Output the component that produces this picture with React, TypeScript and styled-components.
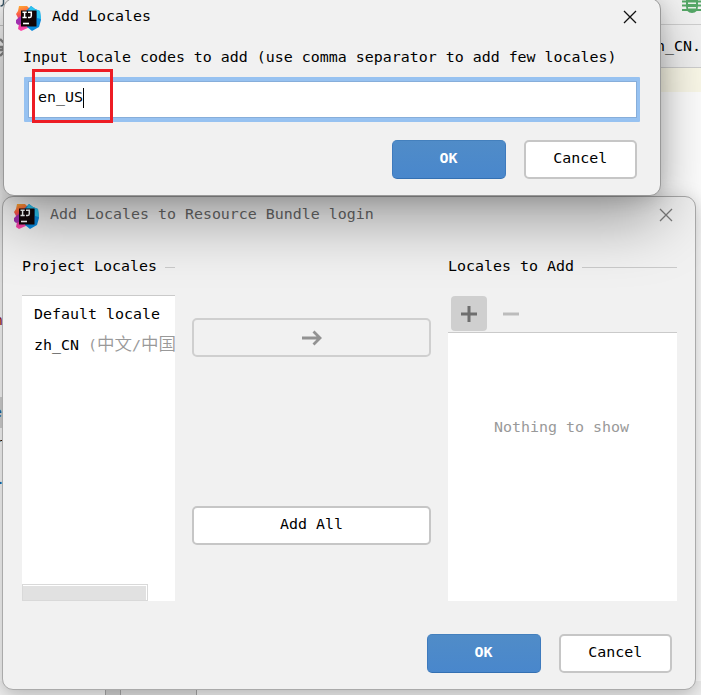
import React from "react";
import styled, { createGlobalStyle } from "styled-components";

const GlobalStyle = createGlobalStyle`
  * { box-sizing: border-box; }
  body { margin: 0; overflow: hidden; }
  button { font: inherit; padding: 0; }
  svg { display: block; flex: none; }
`;

const Desktop = styled.main`
  position: relative;
  width: 701px;
  height: 695px;
  overflow: hidden;
  display: flex;
  justify-content: space-between;
  background: #fff;
  color: #000;
  font: 14.95px/20px "DejaVu Sans Mono", "Noto Sans CJK SC", monospace;
  white-space: nowrap;
`;

const Gutter = styled.div`
  width: 30px;
  height: 695px;
  overflow: hidden;
  display: flex;
  flex-direction: column;
  background: #f8f8f8;
`;

const Fragment = styled.div<{ $h: number; $color?: string; $bg?: string; $shift?: number; $line?: boolean }>`
  height: ${(p) => p.$h}px;
  flex: none;
  color: ${(p) => p.$color ?? "#000"};
  background: ${(p) => p.$bg ?? "transparent"};
  text-indent: ${(p) => p.$shift ?? 0}px;
  border-bottom: ${(p) => (p.$line ? "1px solid #c9c9c9" : "0")};
  line-height: ${(p) => p.$h}px;
`;

const EditorPane = styled.div`
  width: 61px;
  height: 695px;
`;

const ToolStrip = styled.div`
  height: 25px;
  background: #f2f2f2;
  border-bottom: 1px solid #cfcfcf;
  display: flex;
  justify-content: flex-end;
`;

const TabStrip = styled.div`
  height: 43px;
  background: #f2f2f2;
  border-bottom: 1px solid #cfcfcf;
  text-align: right;
  line-height: 43px;
`;

const Banner = styled.div`
  height: 24px;
  background: #fcfaea;
`;

const StatusStrip = styled.div`
  position: absolute;
  left: 0;
  right: 0;
  bottom: 0;
  height: 14px;
  display: grid;
  grid-template-columns: 106px 15px 76px 1fr;
  background: #f2f2f2;
`;

const StatusCell = styled.div<{ $bg: string }>`
  background: ${(p) => p.$bg};
  border-right: 1px solid #a6a6a6;
`;

const Dialog = styled.section<{ $x: number; $y: number; $w: number; $h: number; $front?: boolean }>`
  position: absolute;
  left: ${(p) => p.$x}px;
  top: ${(p) => p.$y}px;
  width: ${(p) => p.$w}px;
  height: ${(p) => p.$h}px;
  border: 1px solid ${(p) => (p.$front ? "#999" : "#aaa")};
  border-radius: 11px;
  background: #f1f1f1;
  box-shadow: ${(p) =>
    p.$front
      ? "0 26px 60px rgba(0,0,0,.34), 0 2px 20px rgba(0,0,0,.17)"
      : "0 5px 20px rgba(0,0,0,.27)"};
`;

const TitleBar = styled.header<{ $dim?: boolean; $h: number }>`
  height: ${(p) => p.$h}px;
  padding: 0 23px 0 12px;
  display: flex;
  align-items: flex-start;
  color: ${(p) => (p.$dim ? "#686868" : "#000")};
`;

const LogoSlot = styled.div<{ $dim?: boolean }>`
  width: 25px;
  height: 25px;
  margin-top: ${(p) => (p.$dim ? 7 : 7)}px;
  margin-left: ${(p) => (p.$dim ? -1 : 0)}px;
`;

const Title = styled.h1`
  margin: 7px auto 0 11px;
  font: inherit;
`;

const CloseIcon = styled.svg<{ $dim?: boolean }>`
  width: 14px;
  height: 14px;
  margin-top: 11px;
  margin-right: ${(p) => (p.$dim ? -1 : 0)}px;
  fill: none;
  stroke: ${(p) => (p.$dim ? "#7c7c7c" : "#111")};
  stroke-width: 1.3;
`;

const PromptBody = styled.div`
  padding: 0 20px 0 19px;
  display: flex;
  flex-direction: column;
`;

const FieldFrame = styled.label`
  height: 45px;
  margin: 10px 0 0 1px;
  border: 4px solid #97c2f1;
  border-radius: 1px;
  border-width: 4px 3px 4px 4px;
  background: #fff;
  box-shadow: inset 0 0 0 1px #87aeda;
  display: flex;
  align-items: center;
  position: relative;
  padding: 0 0 5px 10px;
`;

const Caret = styled.span`
  width: 1px;
  height: 20px;
  margin-top: 1px;
  background: #000;
`;

const Highlight = styled.span`
  position: absolute;
  left: 4px;
  top: -12px;
  width: 81px;
  height: 54px;
  border: 3px solid #ed1c24;
`;

const Actions = styled.footer<{ $top: number }>`
  display: flex;
  gap: 18px;
  justify-content: flex-end;
  padding: ${(p) => p.$top}px 23px 0 0;
`;

const Button = styled.button<{ $primary?: boolean; $muted?: boolean; $wide?: boolean }>`
  width: ${(p) => (p.$wide ? "239px" : p.$primary ? "114px" : "113.5px")};
  height: 39px;
  display: flex;
  align-items: center;
  justify-content: center;
  padding-bottom: ${(p) => (p.$muted ? 0 : 3)}px;
  border-style: solid;
  border-width: ${(p) => (p.$primary ? 1 : 2)}px;
  border-color: ${(p) => (p.$primary ? "#4480bd #3e7abd #3470b2" : p.$muted ? "#cfcfcf" : "#c6c6c6")};
  border-radius: 5px;
  background: ${(p) => (p.$primary ? "linear-gradient(#508cc8, #4987cc)" : p.$muted ? "#f1f1f1" : "#fff")};
  color: ${(p) => (p.$primary ? "#fff" : "#000")};
  font-weight: ${(p) => (p.$primary ? 700 : 400)};
`;

const BundleBody = styled.div`
  height: 345px;
  padding: 0 18px 0 19px;
  display: grid;
  grid-template-columns: 153px 239px 229px;
  justify-content: space-between;
`;

const Column = styled.div`
  display: flex;
  flex-direction: column;
  min-width: 0;
`;

const Heading = styled.h2<{ $gap: number }>`
  margin: 0 0 ${(p) => p.$gap}px;
  font: inherit;
  display: flex;
  align-items: center;
  gap: 8px;
  &::after {
    content: "";
    flex: 1;
    height: 1px;
    margin-top: 3px;
    background: #cacaca;
  }
`;

const List = styled.div<{ $h: number; $center?: boolean }>`
  height: ${(p) => p.$h}px;
  background: #fff;
  border-top: 1px solid #cacaca;
  overflow: hidden;
  display: flex;
  flex-direction: column;
  padding-top: ${(p) => (p.$center ? 84 : 3)}px;
  padding-right: ${(p) => (p.$center ? 2 : 0)}px;
  color: ${(p) => (p.$center ? "#999" : "#000")};
  text-align: ${(p) => (p.$center ? "center" : "left")};
`;

const ListRow = styled.div`
  height: 31px;
  line-height: 31px;
  padding-left: 12px;
  flex: none;
`;

const Region = styled.span`
  color: #999;
`;

const Han = styled.span`
  font: 350 17.5px/20px "Noto Sans CJK SC", sans-serif;
`;

const ScrollThumb = styled.div`
  width: 126px;
  height: 17px;
  flex: none;
  margin-top: auto;
  border: 1px solid #d9d9d9;
  box-shadow: inset -1px 1px 0 #fff;
  background: #e1e1e1;
`;

const Transfer = styled.div`
  padding-top: 62px;
  display: flex;
  flex-direction: column;
  gap: 149px;
`;

const ListTools = styled.div`
  height: 36px;
  padding-left: 3px;
  display: flex;
  gap: 6px;
`;

const ToolButton = styled.div<{ $active?: boolean }>`
  width: 36px;
  height: 35px;
  border-radius: 4px;
  background: ${(p) => (p.$active ? "#cfcfcf" : "transparent")};
  color: ${(p) => (p.$active ? "#6e6e6e" : "#bcbcbc")};
  display: flex;
  align-items: center;
  justify-content: center;
`;

function IdeaLogo({ id }: { id: string }) {
  return (
    <svg width="25" height="25" viewBox="0 0 25 25">
      <defs>
        <linearGradient id={id} x1="0" y1="0" x2="0.2" y2="1">
          <stop offset="0" stopColor="#ffb52e" />
          <stop offset=".35" stopColor="#fb5a44" />
          <stop offset=".58" stopColor="#d3309c" />
          <stop offset="1" stopColor="#ff45a8" />
        </linearGradient>
      </defs>
      <path d="M3 0h8l5 5-7 15 5 1-9 4-3-2 1-5-3-1 2-5-2-4 2-3Z" fill={`url(#${id})`} />
      <path d="m0 14 5-4v8l-3 1-2-2Z" fill="#a02fae" />
      <path d="m15 0 4 3 5 2 1 9-2 7-7 4-5-4-1-16Z" fill="#0a8ade" />
      <path d="m15 0 4 3 5 2 1 8-4-1V5h-9Z" fill="#2cc3ee" />
      <path d="M5 4.5h15.5v16H5z" fill="#120507" />
      <path d="M6.5 6.2h4.2M8.6 6.2v5.2M6.5 11.4h4.2M12 6.2h3.3v3.6q0 1.6-1.4 1.6H12" fill="none" stroke="#fff" strokeWidth="1.5" />
      <path d="M7 17.5h6" stroke="#fff" strokeWidth="1.6" />
    </svg>
  );
}

function Close({ dim }: { dim?: boolean }) {
  return (
    <CloseIcon $dim={dim} viewBox="0 0 14 14">
      <path d="m1 1 12 12M13 1 1 13" />
    </CloseIcon>
  );
}

function DebugIcon() {
  return (
    <svg width="19" height="14" viewBox="0 0 19 14">
      <path d="M4 0h12v6q0 7-6 7T4 6Z" fill="#55a767" />
      <path d="M0 1.5h5M0 5.5h5M0 10h6M14 10h5M15 5.5h4M15 1.5h4" stroke="#55a767" strokeWidth="2" />
      <path d="M6 3.2h8M6 7.7h8" stroke="#e9f1ea" strokeWidth="1.6" />
    </svg>
  );
}

export default function App() {
  return (
    <>
      <GlobalStyle />
      <Desktop>
        <Gutter>
          <Fragment $h={26} $line>
            <svg width="5" height="8" viewBox="0 0 5 8">
              <path d="M3.5 0v3q0 3-3 3" fill="none" stroke="#3c5868" strokeWidth="1.4" />
            </svg>
          </Fragment>
          <Fragment $h={42}>
            <svg width="5" height="38" viewBox="0 0 5 38">
              <path d="M0 13 4 17M0 21h3v3H0M0 30l4-4" fill="none" stroke="#8a8a8a" strokeWidth="2.4" />
            </svg>
          </Fragment>
          <Fragment $h={242} />
          <Fragment $h={20} $color="#8d1628" $shift={-6}>n</Fragment>
          <Fragment $h={67} />
          <Fragment $h={31} $color="#135c94" $bg="#d0d0d0" $shift={-7}>e</Fragment>
          <Fragment $h={5} />
          <Fragment $h={20} $shift={-5}>r</Fragment>
          <Fragment $h={16} />
          <Fragment $h={20} $color="#1263a8" $shift={-4}>.</Fragment>
        </Gutter>
        <EditorPane>
          <ToolStrip><DebugIcon /></ToolStrip>
          <TabStrip>n_CN.</TabStrip>
          <Banner />
        </EditorPane>
        <StatusStrip>
          <StatusCell $bg="#f2f2f2" />
          <StatusCell $bg="#d2d2d2" />
          <StatusCell $bg="#e2e2e2" />
        </StatusStrip>

        <Dialog $x={2} $y={196} $w={694} $h={494}>
          <TitleBar $dim $h={59}>
            <LogoSlot $dim><IdeaLogo id="flameBack" /></LogoSlot>
            <Title>Add Locales to Resource Bundle login</Title>
            <Close dim />
          </TitleBar>
          <BundleBody>
            <Column>
              <Heading $gap={19}>Project Locales</Heading>
              <List $h={306}>
                <ListRow>Default locale</ListRow>
                <ListRow>zh_CN <Region>(<Han>中文</Han>/<Han>中国</Han>)</Region></ListRow>
                <ScrollThumb />
              </List>
            </Column>
            <Transfer>
              <Button $wide $muted>
                <svg width="22" height="16" viewBox="0 0 22 16">
                  <path d="M1 8h18M12.5 1.5 19 8l-6.5 6.5" fill="none" stroke="#929292" strokeWidth="2.8" />
                </svg>
              </Button>
              <Button $wide>Add All</Button>
            </Transfer>
            <Column>
              <Heading $gap={20}>Locales to Add</Heading>
              <ListTools>
                <ToolButton $active>
                  <svg width="16" height="16" viewBox="0 0 16 16">
                    <path d="M0 8h16M8 0v16" stroke="currentColor" strokeWidth="3" />
                  </svg>
                </ToolButton>
                <ToolButton>
                  <svg width="16" height="16" viewBox="0 0 16 16">
                    <path d="M0 8h16" stroke="currentColor" strokeWidth="3" />
                  </svg>
                </ToolButton>
              </ListTools>
              <List $h={269} $center>Nothing to show</List>
            </Column>
          </BundleBody>
          <Actions $top={33}>
            <Button $primary>OK</Button>
            <Button>Cancel</Button>
          </Actions>
        </Dialog>

        <Dialog $front $x={3} $y={-2} $w={658} $h={198}>
          <TitleBar $h={48}>
            <LogoSlot><IdeaLogo id="flameFront" /></LogoSlot>
            <Title>Add Locales</Title>
            <Close />
          </TitleBar>
          <PromptBody>
            <span>Input locale codes to add (use comma separator to add few locales)</span>
            <FieldFrame>
              en_US<Caret />
              <Highlight />
            </FieldFrame>
          </PromptBody>
          <Actions $top={18}>
            <Button $primary>OK</Button>
            <Button>Cancel</Button>
          </Actions>
        </Dialog>
      </Desktop>
    </>
  );
}
